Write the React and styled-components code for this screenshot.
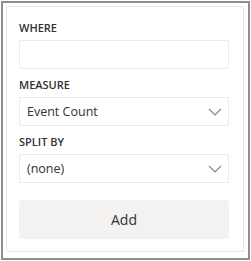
import styled, { createGlobalStyle } from 'styled-components'

const GlobalStyle = createGlobalStyle`
  body {
    margin: 0;
    background: #ffffff;
    font-family: "Open Sans", "Noto Sans", sans-serif;
  }
`

const Frame = styled.div`
  margin: 1px 0 0 1px;
  width: 249px;
  height: 259px;
  box-sizing: border-box;
  border: 2px solid #8e8e8e;
  padding: 3px;
  background: #fff;
`

const Panel = styled.div`
  width: 238px;
  height: 246px;
  box-sizing: border-box;
  border: 1px solid #e6e6e6;
  padding: 13px 14px 0 12px;
  display: flex;
  flex-direction: column;
`

const Label = styled.div`
  font-size: 11px;
  font-weight: 600;
  color: #323130;
  line-height: 15px;
  margin-bottom: 5px;
`

const Field = styled.div`
  height: 29px;
  flex-shrink: 0;
  box-sizing: border-box;
  border: 1px solid #ebebeb;
  border-radius: 2px;
  display: flex;
  align-items: center;
  justify-content: space-between;
  padding: 0 6px 0 7px;
  font-size: 12.5px;
  color: #323130;
  margin-bottom: 8px;
`

const Chevron = () => (
  <svg width="14" height="8" viewBox="0 0 14 8">
    <path d="M1 1 L7 7 L13 1" fill="none" stroke="#8a8886" strokeWidth="1.2" />
  </svg>
)

const AddButton = styled.div`
  height: 39px;
  flex-shrink: 0;
  margin-top: 9px;
  background: #f3f2f1;
  border-radius: 2px;
  display: flex;
  align-items: center;
  justify-content: center;
  font-size: 14px;
  color: #323130;
`

export default function App() {
  return (
    <>
      <GlobalStyle />
      <Frame>
        <Panel>
          <Label>WHERE</Label>
          <Field />
          <Label>MEASURE</Label>
          <Field>
            Event Count
            <Chevron />
          </Field>
          <Label>SPLIT BY</Label>
          <Field>
            (none)
            <Chevron />
          </Field>
          <AddButton>Add</AddButton>
        </Panel>
      </Frame>
    </>
  )
}
